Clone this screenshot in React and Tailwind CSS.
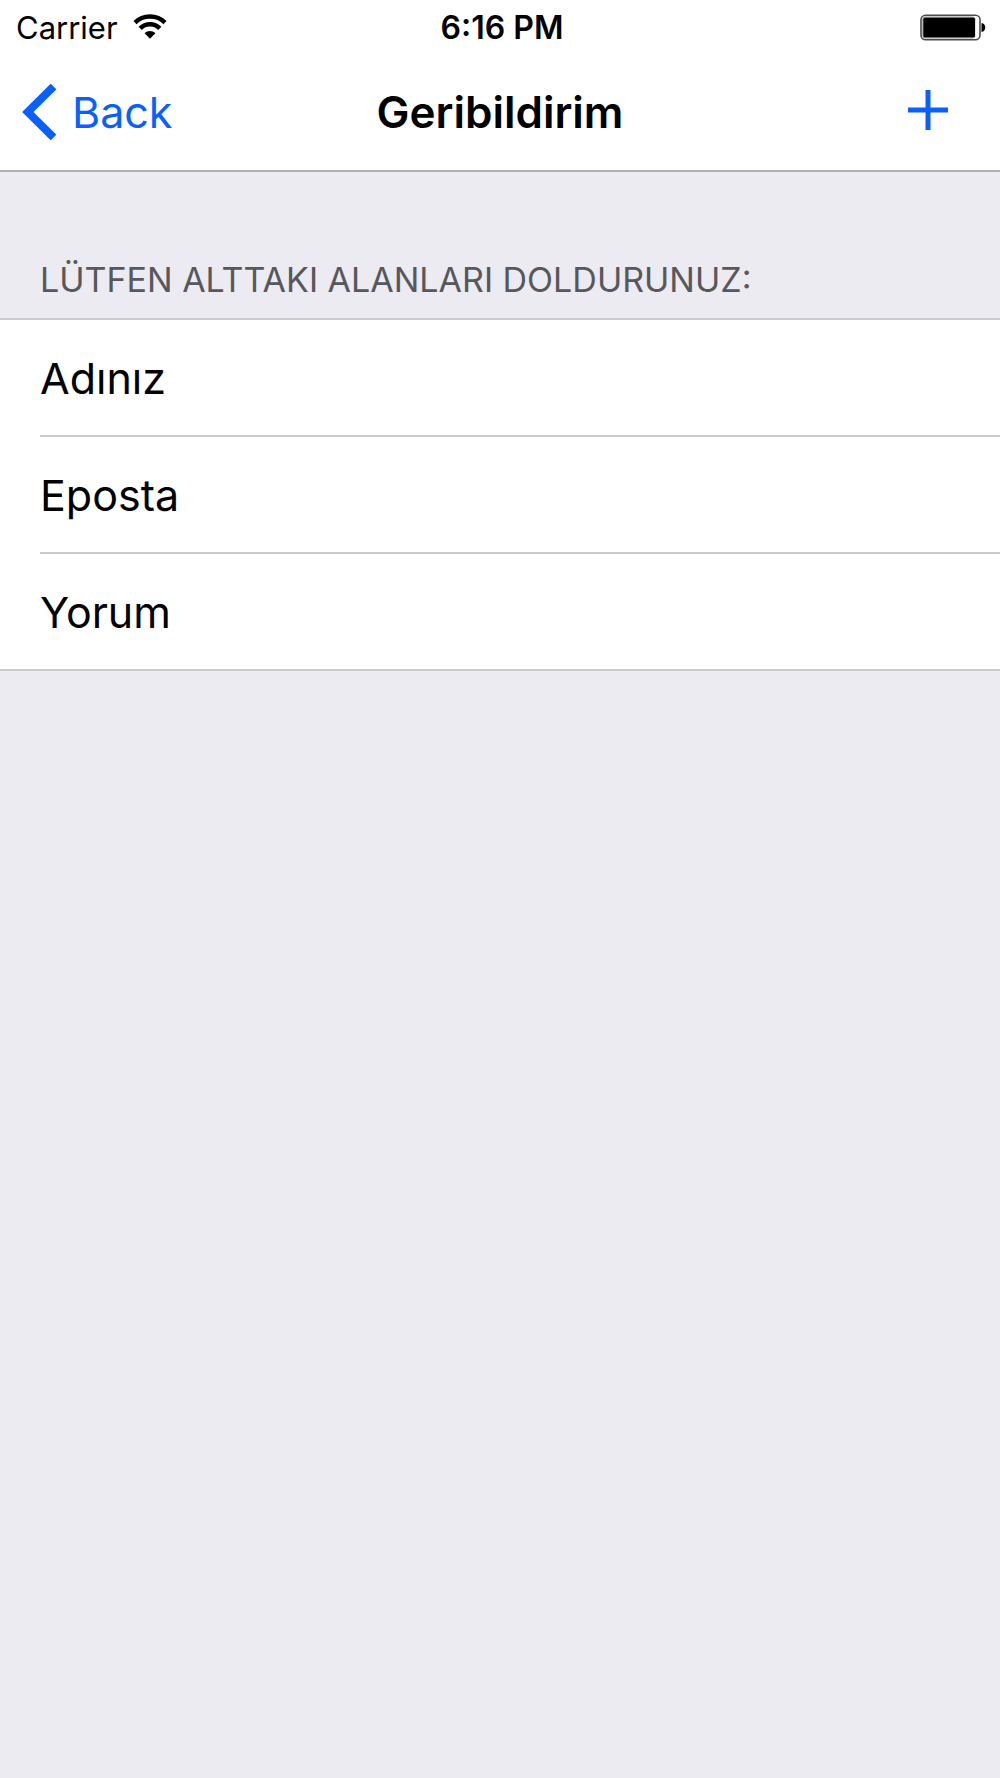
import React, { useState } from 'react';

const fields = [
  { id: 'name', label: 'Adınız', type: 'text' },
  { id: 'email', label: 'Eposta', type: 'email' },
  { id: 'comment', label: 'Yorum', type: 'text' },
];

function WifiIcon() {
  return (
    <svg className="w-9 h-7" viewBox="0 0 36 28" fill="none" stroke="#000" aria-hidden="true">
      <path d="M3 8.6 C11 0.4 25 0.4 33 8.6" strokeWidth="4.4" />
      <path d="M8.2 14.4 C13.5 8.9 22.5 8.9 27.8 14.4" strokeWidth="4.4" />
      <path d="M18 24.8 L12.6 19.2 C15.6 16.2 20.4 16.2 23.4 19.2 Z" fill="#000" stroke="none" />
    </svg>
  );
}

function BatteryIcon() {
  return (
    <svg className="w-17 h-7" viewBox="0 0 68 28" fill="none" aria-hidden="true">
      <rect x="1" y="1.2" width="59" height="24.6" rx="4.5" fill="#fff" stroke="#4d4d4d" strokeWidth="1.6" />
      <rect x="2.3" y="2.5" width="53" height="22" rx="3" fill="#999" />
      <rect x="3.4" y="3.8" width="51.6" height="19.4" rx="1.5" fill="#000" />
      <path d="M61.5 9 C66.5 9.5 66.5 17.5 61.5 18 Z" fill="#000" />
    </svg>
  );
}

function StatusBar() {
  return (
    <div className="grid grid-cols-3 items-center h-14 pl-4 pr-3 text-[31px] leading-9">
      <div className="flex items-center gap-3.5">
        <span>Carrier</span>
        <WifiIcon />
      </div>
      <span className="text-center font-semibold text-[32px]">6:16 PM</span>
      <div className="flex justify-end">
        <BatteryIcon />
      </div>
    </div>
  );
}

function NavBar({ onAdd }) {
  return (
    <nav className="grid grid-cols-3 items-center h-29 px-5 pb-0.5 border-b-2 border-[#b0b0b3]">
      <a href="#back" className="flex items-center gap-4 text-[#0a60ff]">
        <svg className="w-9 h-14" viewBox="0 0 36 56" fill="none" stroke="currentColor" strokeWidth="8" aria-hidden="true">
          <path d="M33.5 2.5 L7.8 28 L33.5 53.5" />
        </svg>
        <span>Back</span>
      </a>
      <h1 className="text-center font-semibold text-[44px]">Geribildirim</h1>
      <div className="flex justify-end pr-8 pb-1">
        <button type="button" aria-label="Ekle" className="text-[#0a60ff]" onClick={onAdd}>
          <svg className="w-10 h-10" viewBox="0 0 40 40" stroke="currentColor" strokeWidth="5" aria-hidden="true">
            <path d="M20 0 V40 M0 20 H40" />
          </svg>
        </button>
      </div>
    </nav>
  );
}

export default function App() {
  const [form, setForm] = useState({ name: '', email: '', comment: '' });

  const handleChange = (e) => {
    setForm({ ...form, [e.target.id]: e.target.value });
  };

  return (
    <div className="min-h-screen bg-[#ebebf1] text-black text-[43px] leading-14 font-['Inter',sans-serif]">
      <header className="bg-white">
        <StatusBar />
        <NavBar onAdd={() => setForm({ name: '', email: '', comment: '' })} />
      </header>

      <form>
        <h2 className="px-10 pt-21 pb-3.5 text-[34px] leading-12 text-[#58585c]">
          LÜTFEN ALTTAKI ALANLARI DOLDURUNUZ:
        </h2>
        <div className="bg-white border-y-2 border-[#cbcacf]">
          {fields.map((field) => (
            <div key={field.id} className="pl-10 group">
              <div className="box-content flex items-center gap-6 h-[115px] border-b-2 border-[#cbcacf] group-last:border-b-0">
                <label htmlFor={field.id}>{field.label}</label>
                <input
                  id={field.id}
                  type={field.type}
                  value={form[field.id]}
                  onChange={handleChange}
                  className="flex-1 min-w-0 h-full pr-10 bg-transparent outline-none"
                />
              </div>
            </div>
          ))}
        </div>
      </form>
    </div>
  );
}
